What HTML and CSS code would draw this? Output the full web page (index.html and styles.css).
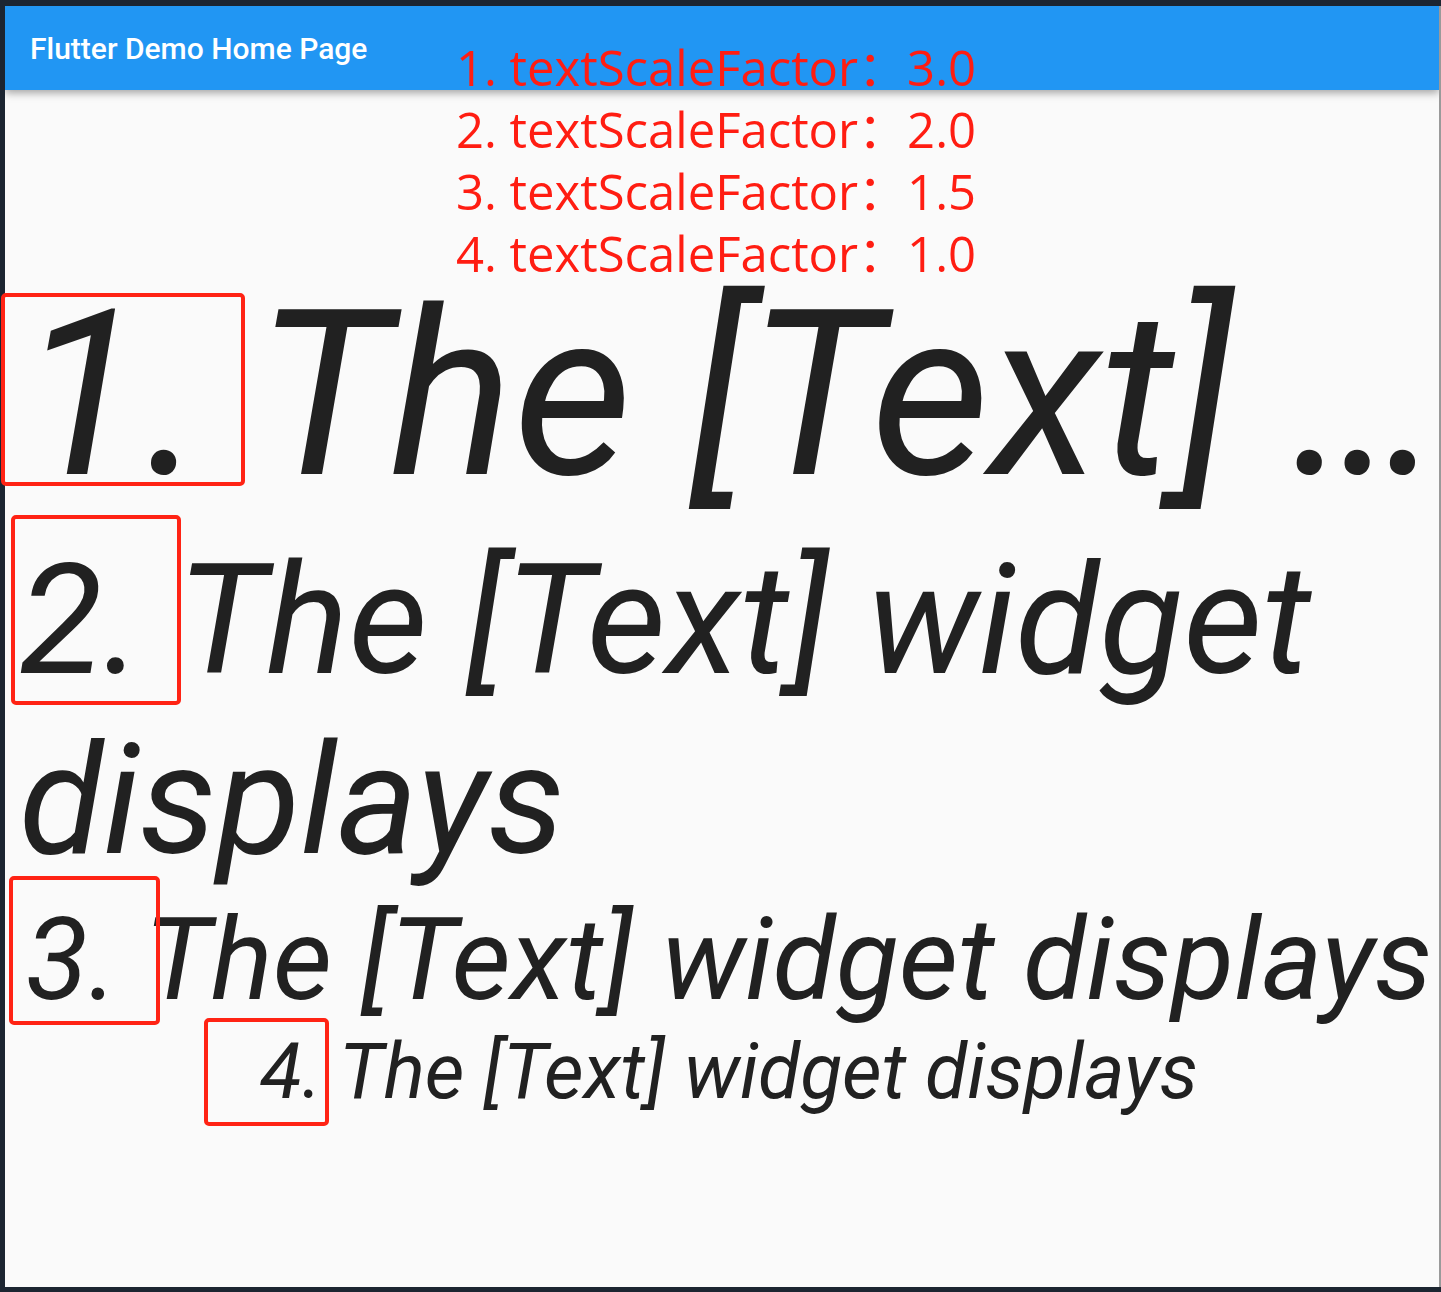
FILE: index.html
```html
<!DOCTYPE html>
<html lang="en">
<head>
<meta charset="utf-8">
<title>Flutter Demo Home Page</title>
<link rel="stylesheet" href="styles.css">
</head>
<body>
<div class="page">
  <div class="screen">
    <header class="appbar">
      <h1 class="appbar-title">Flutter Demo Home Page</h1>
    </header>
    <main class="content">
      <p class="demo demo-1">1. The [Text] …</p>
      <p class="demo demo-2">2. The [Text] widget displays</p>
      <p class="demo demo-3">3. The [Text] widget displays</p>
      <p class="demo demo-4">4. The [Text] widget displays</p>
    </main>
  </div>

  <div class="notes">
    <div class="note">1. textScaleFactor：3.0</div>
    <div class="note">2. textScaleFactor：2.0</div>
    <div class="note">3. textScaleFactor：1.5</div>
    <div class="note">4. textScaleFactor：1.0</div>
  </div>

  <div class="mark mark-1"></div>
  <div class="mark mark-2"></div>
  <div class="mark mark-3"></div>
  <div class="mark mark-4"></div>
</div>
</body>
</html>
```

FILE: styles.css
```css
html, body {
  margin: 0;
  padding: 0;
}

body {
  background: #1c2531;
  width: 1441px;
  height: 1292px;
  overflow: hidden;
}

.page {
  position: relative;
  width: 1441px;
  height: 1292px;
  padding: 6px 0 5px 5px;
  box-sizing: border-box;
}

.screen {
  width: 1434px;
  height: 1281px;
  background: #fafafa;
  border-right: 2px solid #9a9a9a;
  display: flex;
  flex-direction: column;
  overflow: hidden;
}

.appbar {
  height: 84px;
  flex: none;
  background: #2196f3;
  display: flex;
  align-items: center;
  padding-left: 25px;
  box-shadow: 0 3px 8px rgba(0, 0, 0, 0.35);
  position: relative;
  z-index: 1;
}

.appbar-title {
  margin: 0;
  font-family: Roboto, "Liberation Sans", sans-serif;
  font-weight: 500;
  font-size: 30px;
  color: #ffffff;
  letter-spacing: 0;
}

.content {
  flex: 1;
  display: flex;
  flex-direction: column;
  justify-content: center;
  align-items: center;
  min-height: 0;
  padding-left: 14px;
}

.demo {
  margin: 0;
  font-family: Roboto, "Liberation Sans", sans-serif;
  font-style: italic;
  font-weight: 400;
  color: #212121;
  line-height: 1.172;
  max-width: 100%;
  text-align: left;
}

.demo-1 {
  font-size: 231px;
  white-space: nowrap;
}

.demo-2 {
  font-size: 154px;
}

.demo-3 {
  font-size: 115.5px;
  white-space: nowrap;
}

.demo-4 {
  font-size: 77px;
  white-space: nowrap;
}

.notes {
  position: absolute;
  left: 456px;
  top: 36px;
  z-index: 2;
}

.note {
  font-family: "Open Sans", "Noto Sans CJK SC", sans-serif;
  font-size: 49px;
  line-height: 62px;
  color: #ff1d12;
  white-space: nowrap;
}

.mark {
  position: absolute;
  border: 4px solid #ff2314;
  border-radius: 5px;
  box-sizing: border-box;
  z-index: 3;
}

.mark-1 { left: 1px;   top: 293px;  width: 244px; height: 193px; }
.mark-2 { left: 11px;  top: 515px;  width: 170px; height: 190px; }
.mark-3 { left: 9px;   top: 876px;  width: 151px; height: 149px; }
.mark-4 { left: 204px; top: 1018px; width: 125px; height: 108px; }
```
